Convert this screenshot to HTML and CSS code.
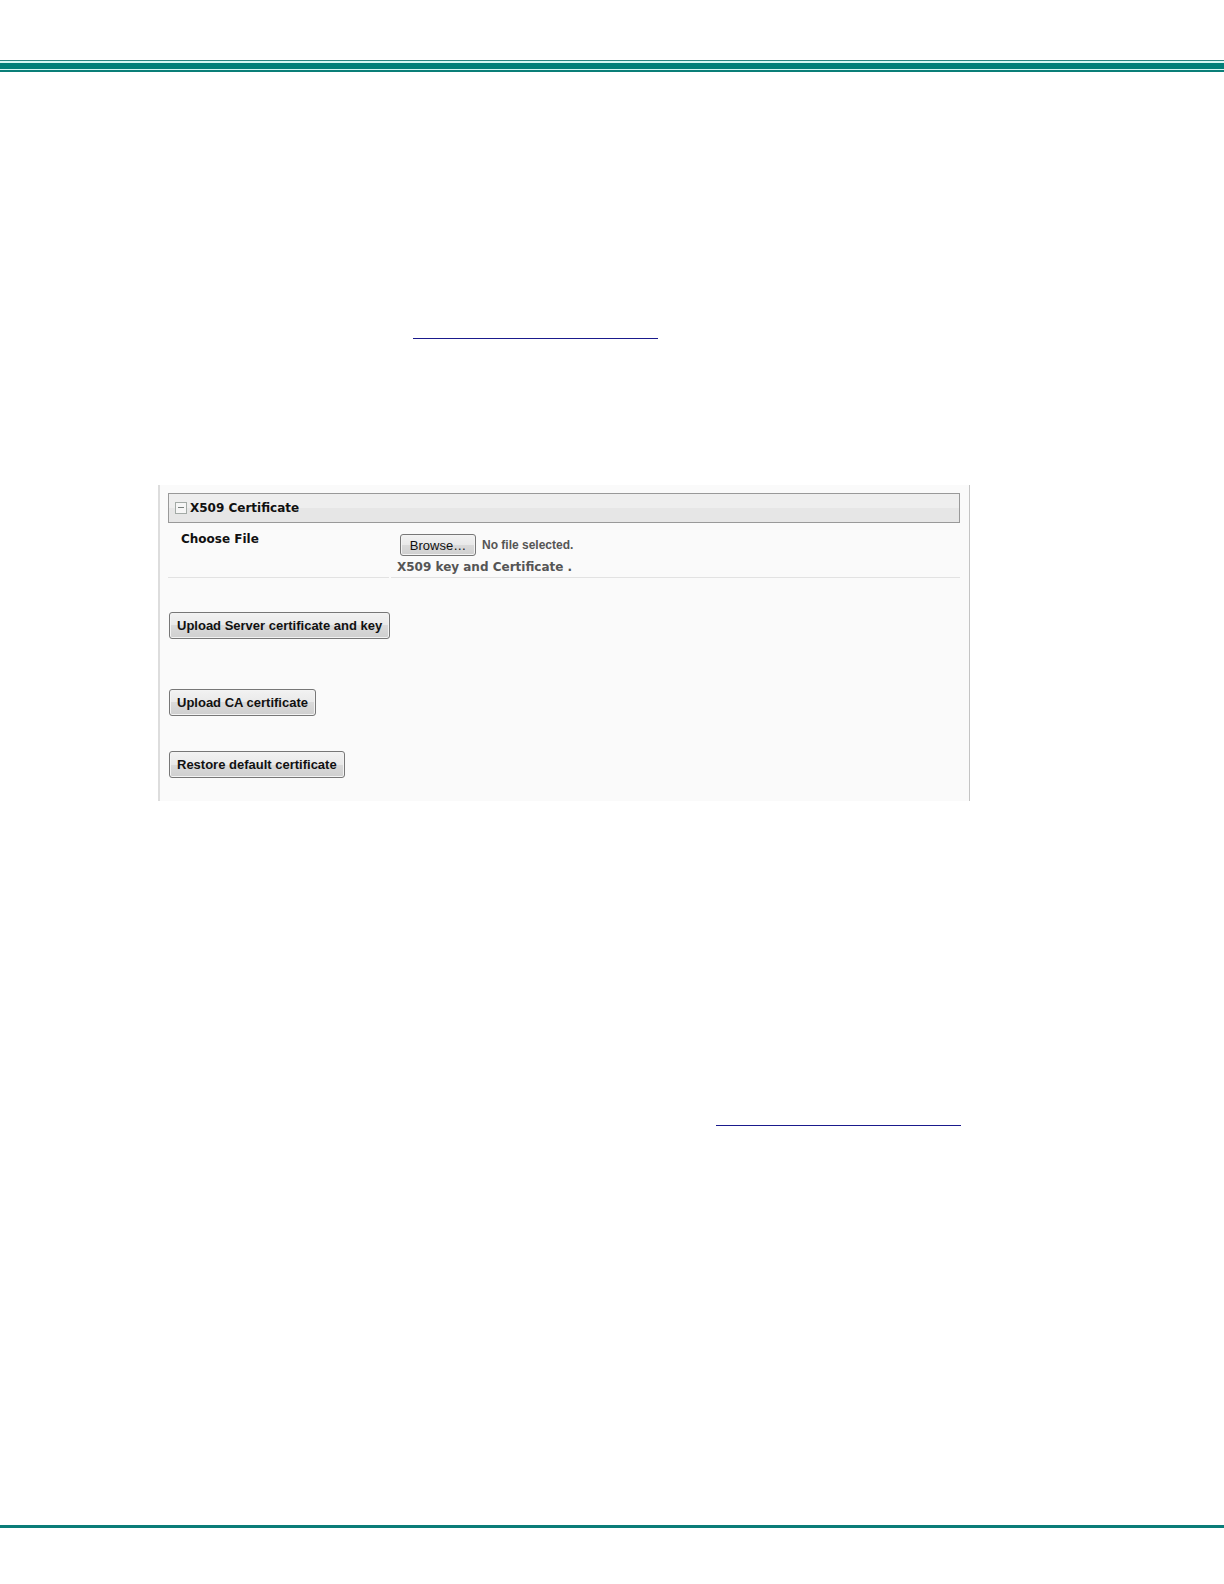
FILE: index.html
```
<!DOCTYPE html>
<html lang="en">

<head>
  <meta charset="UTF-8">
  <meta name="viewport" content="width=device-width, initial-scale=1.0">
  <title>X509 Certificate</title>
  <link rel="stylesheet" href="styles.css">
</head>

<body>
  <header class="page-top">
    <div class="thick"></div>
  </header>

  <main>
    <p class="ref ref-first"><a href="#certificate" aria-label="X509 Certificate"></a></p>

    <section class="panel" id="certificate">
      <h2>
        <button class="toggle" type="button" aria-label="Collapse">
          <svg width="12" height="12" viewBox="0 0 12 12">
            <rect x="0.5" y="0.5" width="11" height="11" fill="#f6f6f6" stroke="#a3aaa6"/>
            <path d="M3 5.5h6" stroke="#777f7b"/>
          </svg>
        </button>
        X509 Certificate
      </h2>
      <form>
        <div class="row">
          <label class="name" for="cert-file">Choose File</label>
          <div class="value">
            <div class="file">
              <input type="file" id="cert-file" hidden>
              <button class="browse" type="button">Browse…</button>
              <span class="file-name">No file selected.</span>
            </div>
            <p class="hint">X509 key and Certificate .</p>
          </div>
        </div>
        <div class="actions">
          <button class="server" type="button">Upload Server certificate and key</button>
          <button class="ca" type="button">Upload CA certificate</button>
          <button type="button">Restore default certificate</button>
        </div>
      </form>
    </section>

    <p class="ref ref-last"><a href="#certificate" aria-label="X509 Certificate"></a></p>
  </main>

  <footer class="page-bottom"></footer>

  <script>
    const file = document.querySelector('#cert-file');
    document.querySelector('.browse').addEventListener('click', () => file.click());
    file.addEventListener('change', () => {
      document.querySelector('.file-name').textContent =
        file.files.length ? file.files[0].name : 'No file selected.';
    });
  </script>
</body>

</html>
```
FILE: styles.css
```
*{margin: 0; padding: 0; box-sizing: border-box;}
body{
  padding: 60px 0 40px;
  background-color: #fff;
  font-family: "DejaVu Sans", Verdana, sans-serif;
  font-size: 12px;
}

/* page rules */
.page-top{
  padding: 2px 0 1px;
  border-top: 1px solid #2a8580;
  border-bottom: 2px solid #0a7f78;
  background-color: #d5f7f3;
}
.thick{
  height: 6px;
  background-color: #007f78;
}
.page-bottom{
  height: 3px;
  background-color: #0a7c78;
}

main{
  padding: 0 254px 0 158px;
}

/* reference links */
.ref{
  display: flex;
  height: 20px;
}
.ref a{
  width: 245px;
  border-bottom: 1px solid #1a1a8c;
}
.ref-first{
  margin: 247px 0 146px;
  padding-left: 255px;
}
.ref-last{
  margin: 305px 0 399px;
  padding-left: 558px;
}

/* certificate panel */
.panel{
  padding: 8px 9px 23px 8px;
  border-left: 2px solid #ddd;
  border-right: 1px solid #c4c4c4;
  background-color: #fafafa;
}
.panel h2{
  display: flex;
  align-items: center;
  gap: 3px;
  height: 30px;
  padding-left: 6px;
  border: 1px solid #999;
  background: linear-gradient(#eee 50%, #e6e6e6 50%);
  color: #111;
  font-size: 12px;
}
.toggle{
  width: 12px;
  height: 16px;
  border: 0;
  background: none;
}
.toggle svg{
  display: block;
}
.row{
  display: flex;
  gap: 2px;
  height: 55px;
}
.name,
.value{
  border-bottom: 1px solid #e2e2e2;
  font-weight: bold;
}
.name{
  width: 221px;
  padding: 9px 0 0 13px;
  color: #111;
}
.value{
  flex: 1;
  padding: 11px 0 0 6px;
  color: #555;
}
.file{
  display: flex;
  align-items: center;
  gap: 6px;
  padding-left: 3px;
  font-family: "Liberation Sans", Arial, sans-serif;
}
.hint{
  margin-top: 4px;
}

/* buttons */
.browse,
.actions button{
  border: 1px solid #777;
  border-radius: 3px;
  background: linear-gradient(#f2f2f2, #e9e9e9 50%, #dadada 50%, #cfcfcf);
  box-shadow: inset 0 0 0 1px #f3f3f3;
  color: #111;
  font: 13px "Liberation Sans", Arial, sans-serif;
}
.browse{
  width: 76px;
  height: 22px;
}
.actions{
  display: flex;
  flex-direction: column;
  align-items: flex-start;
  padding: 34px 0 0 1px;
}
.actions button{
  height: 27px;
  margin-bottom: 35px;
  padding: 0 7px;
  font-weight: bold;
}
.actions .server{
  margin-bottom: 50px;
}
.actions button:last-child{
  margin-bottom: 0;
}
```
